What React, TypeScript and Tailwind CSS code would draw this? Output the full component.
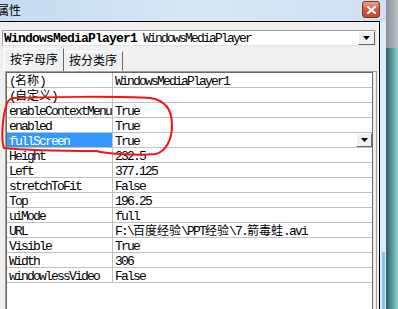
import React from "react";

const rows: [string, string][] = [
  ["(名称)", "WindowsMediaPlayer1"],
  ["(自定义)", ""],
  ["enableContextMenu", "True"],
  ["enabled", "True"],
  ["fullScreen", "True"],
  ["Height", "232.5"],
  ["Left", "377.125"],
  ["stretchToFit", "False"],
  ["Top", "196.25"],
  ["uiMode", "full"],
  ["URL", "F:\\百度经验\\PPT经验\\7.箭毒蛙.avi"],
  ["Visible", "True"],
  ["Width", "306"],
  ["windowlessVideo", "False"],
];

function T({ s }: { s: string }) {
  const parts = s.split(/([\u3400-\u9fff]+)/).filter((p) => p.length > 0);
  return (
    <>
      {parts.map((p, i) =>
        /[\u3400-\u9fff]/.test(p) ? (
          <span
            key={i}
            className="font-['Noto_Sans_CJK_SC',sans-serif] tracking-normal text-[12px] leading-[7px]"
          >
            {p}
          </span>
        ) : (
          <span key={i}>{p}</span>
        )
      )}
    </>
  );
}

function DropBtn({ cls }: { cls: string }) {
  return (
    <div
      className={
        "flex items-center justify-center bg-[#f0f0f0] border border-t-white border-l-white border-r-[#696969] border-b-[#696969] " +
        cls
      }
    >
      <svg width="7" height="4" viewBox="0 0 7 4">
        <path d="M0 0 H7 L3.5 4 Z" fill="#000" />
      </svg>
    </div>
  );
}

export default function App() {
  return (
    <div className="relative w-[398px] h-[309px] overflow-hidden flex bg-[#f0f0f0] font-['Liberation_Mono','Noto_Sans_CJK_SC',monospace] text-[13px] text-black">
      {/* window */}
      <div className="w-[386px] h-full flex flex-col">
        {/* title bar */}
        <div className="h-[21px] flex items-start justify-between bg-gradient-to-r from-[#c6dbef] via-[#d8e7f5] to-[#cfe1f2]">
          <span className="ml-[-3px] mt-[2px] leading-[16px] text-[12px] font-['Noto_Sans_CJK_SC',sans-serif] text-black">
            属性
          </span>
          <div className="mt-[1px] mr-[6px] w-[18px] h-[17px] rounded-[3px] border border-[#7a3228] bg-gradient-to-b from-[#e8a58f] via-[#d25a3e] to-[#c8452c] flex items-center justify-center">
            <svg width="9" height="8" viewBox="0 0 9 8">
              <path d="M1 1 L8 7 M8 1 L1 7" stroke="#fff" strokeWidth="2.2" strokeLinecap="square" />
            </svg>
          </div>
        </div>
        <div className="flex-1 flex">
          {/* panel */}
          <div className="w-[380px] h-full bg-[#f0f0f0] border-t border-r border-black flex flex-col">
            {/* combo */}
            <div className="mt-[8px] ml-[2px] w-[374px] h-[16px] bg-white border border-t-[#a0a0a0] border-l-[#a0a0a0] border-r-[#e3e3e3] border-b-[#e3e3e3] flex items-center">
              <div className="flex-1 pl-[1px] pt-[1px] leading-[13px] whitespace-nowrap">
                <span className="font-bold tracking-[-0.8px]">WindowsMediaPlayer1</span>
                <span className="tracking-[-1.8px]"> WindowsMediaPlayer</span>
              </div>
              <DropBtn cls="w-[17px] h-[14px] mr-[0px]" />
            </div>
            {/* tabs */}
            <div className="mt-[2px] h-[23px] flex items-end pl-[4px]">
              <div className="w-[60px] h-[23px] border-l border-t border-white border-r border-r-[#696969] flex items-start justify-center font-['Noto_Sans_CJK_SC',sans-serif] text-[12px] leading-[14px] pt-[3px]">
                按字母序
              </div>
              <div className="w-[59px] h-[20px] border-t border-white border-r border-r-[#696969] border-b border-b-white flex items-start justify-center font-['Noto_Sans_CJK_SC',sans-serif] text-[12px] leading-[14px] pt-[1px]">
                按分类序
              </div>
            </div>
            {/* grid */}
            <div className="ml-[5px] w-[372px] flex-1 border-l border-t border-[#a0a0a0] border-r border-r-[#a0a0a0]">
              <div className="h-full w-[367px] bg-white border-l border-t border-[#696969] border-r border-r-[#696969] tracking-[-1.8px]">
                {rows.map(([k, v], i) => {
                  const sel = k === "fullScreen";
                  return (
                    <div key={i} className="h-[15px] flex border-b border-[#c0c0c0]">
                      <div
                        className={
                          "w-[106px] pl-[2px] pt-[3px] border-r border-[#c0c0c0] leading-[11px] whitespace-nowrap " +
                          (sel ? "bg-[#3399ff] text-white" : "")
                        }
                      >
                        <T s={k} />
                      </div>
                      <div className="flex-1 pl-[2px] whitespace-nowrap flex">
                        <div className="flex-1 pt-[3px] leading-[11px]">
                          <T s={v} />
                        </div>
                        {sel && <DropBtn cls="w-[16px] h-[14px]" />}
                      </div>
                    </div>
                  );
                })}
              </div>
            </div>
          </div>
          {/* frame strip */}
          <div className="w-[6px] h-full flex flex-col bg-[#dcecf8]">
            <div className="h-[231px]" />
            <div className="flex-1 ml-[2px] w-[3px] bg-[#8cc4ec]" />
          </div>
        </div>
      </div>
      {/* desktop */}
      <div className="w-[12px] h-full flex flex-col">
        <div className="h-[48px] bg-gradient-to-r from-[#8c9296] to-[#b9c2c6]" />
        <div className="flex-1 bg-gradient-to-r from-[#2f5c5f] via-[#5a9a9c] to-[#92d0d0]" />
      </div>
      {/* red annotation */}
      <svg className="absolute left-0 top-0 pointer-events-none" width="398" height="309" viewBox="0 0 398 309">
        <path
          d="M12 98 C40 97 120 96 150 98 C165 100 172 110 172 125 C172 140 166 151 156 154 C130 156 105 153 96 151 C60 151 22 150 4 148 C1 140 2 120 6 106 C7 101 9 99 14 98"
          fill="none"
          stroke="#ff1010"
          strokeWidth="2"
        />
      </svg>
    </div>
  );
}
